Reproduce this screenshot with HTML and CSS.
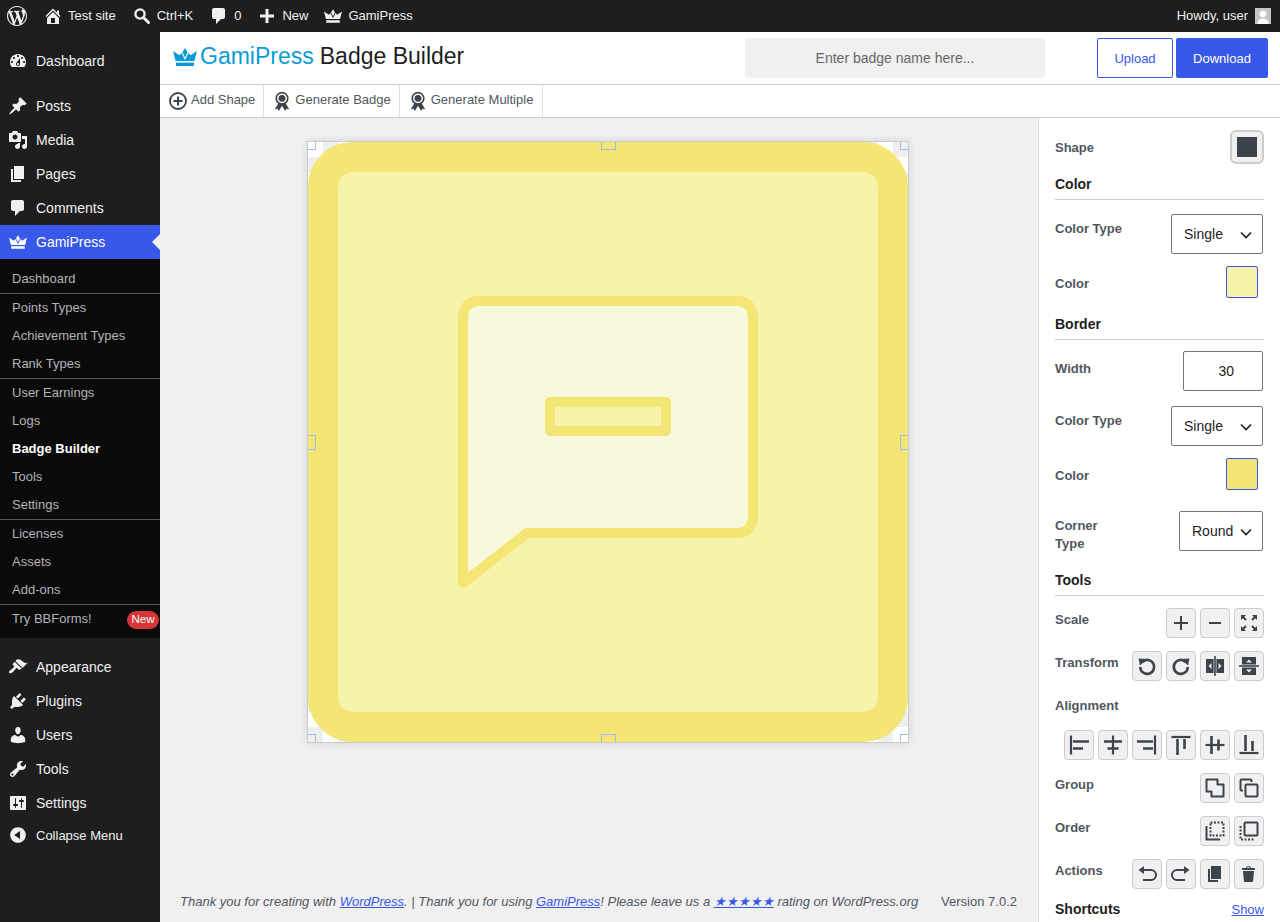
FILE: index.html
```html
<!DOCTYPE html>
<html>
<head>
    <title>Badge Builder</title>
    <link rel="stylesheet" href="styles.css">
</head>
<body>
    <svg class="icon-defs" xmlns="http://www.w3.org/2000/svg">
        <symbol id="i-wp" viewBox="0 0 20 20"><path d="M20 10c0-5.51-4.49-10-10-10C4.48 0 0 4.49 0 10c0 5.52 4.48 10 10 10 5.51 0 10-4.48 10-10zM7.78 15.37L4.37 6.22c.55-.02 1.17-.08 1.17-.08.5-.06.44-1.13-.06-1.11 0 0-1.45.11-2.37.11-.18 0-.37 0-.58-.01C4.12 2.69 6.87 1.11 10 1.11c2.33 0 4.45.87 6.05 2.34-.68-.11-1.65.39-1.65 1.58 0 .74.45 1.36.9 2.1.35.61.55 1.36.55 2.46 0 1.49-1.4 5-1.4 5l-3.03-8.37c.54-.02.82-.17.82-.17.5-.05.44-1.25-.06-1.22 0 0-1.44.12-2.38.12-.87 0-2.33-.12-2.33-.12-.5-.03-.56 1.2-.06 1.22l.92.08 1.26 3.41zM17.41 10c.24-.64.74-1.87.43-4.25.7 1.29 1.05 2.71 1.05 4.25 0 3.29-1.73 6.24-4.4 7.78.97-2.59 1.94-5.2 2.92-7.78zM6.1 18.09C3.12 16.65 1.11 13.53 1.11 10c0-1.3.23-2.48.72-3.59C3.25 10.3 4.67 14.2 6.1 18.09zm4.03-6.63l2.58 6.98c-.86.29-1.76.45-2.71.45-.79 0-1.57-.11-2.29-.33.81-2.38 1.62-4.74 2.42-7.1z"/></symbol>
        <symbol id="i-home" viewBox="0 0 20 20"><path d="M16 8.5l1.53 1.53-1.06 1.06L10 4.62l-6.47 6.47-1.06-1.06L10 2.5l4 4v-2h2v4zm-6-2.46l6 5.99V18H4v-5.97zM12 17v-5H8v5h4z"/></symbol>
        <symbol id="i-search" viewBox="0 0 20 20"><circle cx="8" cy="8" r="4.6" fill="none" stroke="currentColor" stroke-width="2.4"/><path d="M11.5 11.5l5 5" stroke="currentColor" stroke-width="3" stroke-linecap="round"/></symbol>
        <symbol id="i-comment" viewBox="0 0 20 20"><path d="M5 2h9c1.1 0 2 .9 2 2v7c0 1.1-.9 2-2 2h-2l-5 5v-5H5c-1.1 0-2-.9-2-2V4c0-1.1.9-2 2-2z"/></symbol>
        <symbol id="i-plus" viewBox="0 0 20 20"><path d="M8.5 3h3v5.5H17v3h-5.5V17h-3v-5.5H3v-3h5.5z"/></symbol>
        <symbol id="i-crown" viewBox="0 0 24 18"><path d="M12 0l2.6 4.2L12 9.4 9.4 4.2zM0 3l6.4 4.2L8.6 5 12 12l3.4-7 2.2 2.2L24 3l-2.6 10H2.6z"/><path d="M3 14.6h18V18H3z"/></symbol>
        <symbol id="i-dashboard" viewBox="0 0 20 20"><path d="M3.76 16h12.48c1.1-1.37 1.76-3.11 1.76-5 0-4.42-3.58-8-8-8s-8 3.58-8 8c0 1.89.66 3.63 1.76 5zM10 4c.55 0 1 .45 1 1s-.45 1-1 1-1-.45-1-1 .45-1 1-1zM6 6c.55 0 1 .45 1 1s-.45 1-1 1-1-.45-1-1 .45-1 1-1zm8 0c.55 0 1 .45 1 1s-.45 1-1 1-1-.45-1-1 .45-1 1-1zm-5.37 5.55L12 7v6c0 1.1-.9 2-2 2s-2-.9-2-2c0-.57.24-1.08.63-1.45zM4 10c.55 0 1 .45 1 1s-.45 1-1 1-1-.45-1-1 .45-1 1-1zm12 0c.55 0 1 .45 1 1s-.45 1-1 1-1-.45-1-1 .45-1 1-1zm-5 3c0-.55-.45-1-1-1s-1 .45-1 1 .45 1 1 1 1-.45 1-1z" fill-rule="evenodd"/></symbol>
        <symbol id="i-post" viewBox="0 0 20 20"><path d="M10.44 3.02l1.82-1.82 6.36 6.35-1.83 1.82c-1.05-.68-2.48-.57-3.41.36l-.75.75c-.92.93-1.04 2.35-.35 3.41l-1.83 1.82-2.41-2.41-2.8 2.79c-.42.42-3.38 2.71-3.8 2.29s1.86-3.39 2.28-3.81l2.79-2.79L4.1 9.36l1.83-1.82c1.05.69 2.48.57 3.4-.36l.75-.75c.93-.92 1.05-2.35.36-3.41z"/></symbol>
        <symbol id="i-media" viewBox="0 0 20 20"><path d="M13 11V4c0-.55-.45-1-1-1h-1.67L9 1H5L3.67 3H2c-.55 0-1 .45-1 1v7c0 .55.45 1 1 1h10c.55 0 1-.45 1-1zM7 4.5c1.38 0 2.5 1.12 2.5 2.5S8.38 9.5 7 9.5 4.5 8.38 4.5 7 5.62 4.5 7 4.5zM14 6h5v10.5c0 1.38-1.12 2.5-2.5 2.5S14 17.88 14 16.5s1.12-2.5 2.5-2.5c.17 0 .34.02.5.05V9h-3V6zm-4 8.05V13h2v3.5c0 1.38-1.12 2.5-2.5 2.5S7 17.88 7 16.5 8.12 14 9.5 14c.17 0 .34.02.5.05z"/></symbol>
        <symbol id="i-page" viewBox="0 0 20 20"><path d="M6 15V2h10v13H6zm-1 1h8v2H3V5h2v11z"/></symbol>
        <symbol id="i-appearance" viewBox="0 0 20 20"><path d="M14.48 11.06L7.41 3.99l1.5-1.5c.5-.56 2.3-.47 3.51.32 1.21.8 1.43 1.28 2.91 2.1 1.18.64 2.45 1.26 4.45.85zm-.71.71L6.7 4.7 4.93 6.47c-.39.39-.39 1.02 0 1.41l1.06 1.06c.39.39.39 1.03 0 1.42-.6.6-1.43 1.11-2.21 1.69-.35.26-.7.53-1.01.84C1.43 13.23.4 14.98 1.4 15.98c.99 1 2.75-.03 4.08-1.36.31-.31.58-.66.85-1.02.57-.78 1.08-1.61 1.69-2.21.39-.39 1.02-.39 1.41 0l1.06 1.06c.39.39 1.02.39 1.41 0z"/></symbol>
        <symbol id="i-plugins" viewBox="0 0 20 20"><path d="M13.11 4.36L9.87 7.6 8 5.73l3.24-3.24c.35-.34 1.05-.2 1.56.32.52.51.66 1.21.31 1.55zm-8 1.77l.91-1.12 9.01 9.01-1.19.84c-.71.71-2.63 1.16-3.82 1.16H6.14L4.9 17.26c-.59.59-1.54.59-2.12 0-.59-.58-.59-1.53 0-2.12l1.24-1.24v-3.88c0-1.13.4-3.19 1.09-3.89zm7.26 3.97l3.24-3.24c.34-.35 1.04-.21 1.55.31.52.51.66 1.21.31 1.55l-3.24 3.25z"/></symbol>
        <symbol id="i-users" viewBox="0 0 20 20"><path d="M10 9.25c-2.27 0-2.73-3.44-2.73-3.44C7 4.02 7.82 2 9.97 2c2.16 0 2.98 2.02 2.71 3.81 0 0-.41 3.44-2.68 3.44zm0 2.57L12.72 10c2.39 0 4.52 2.33 4.52 4.53v2.49s-3.65 1.13-7.24 1.13c-3.65 0-7.24-1.13-7.24-1.13v-2.49c0-2.25 1.94-4.48 4.47-4.48z"/></symbol>
        <symbol id="i-tools" viewBox="0 0 20 20"><path d="M16.68 9.77c-1.34 1.34-3.3 1.67-4.95.99l-5.41 6.52c-.99.99-2.59.99-3.58 0s-.99-2.59 0-3.57l6.52-5.42c-.68-1.65-.35-3.61.99-4.95 1.28-1.28 3.12-1.62 4.72-1.06l-2.89 2.89 2.82 2.82 2.86-2.87c.53 1.58.18 3.39-1.08 4.65zM3.81 16.21c.4.39 1.04.39 1.43 0 .4-.4.4-1.04 0-1.43-.39-.4-1.03-.4-1.43 0-.39.39-.39 1.03 0 1.43z"/></symbol>
        <symbol id="i-settings" viewBox="0 0 20 20"><path d="M18 16V4c0-.55-.45-1-1-1H3c-.55 0-1 .45-1 1v12c0 .55.45 1 1 1h14c.55 0 1-.45 1-1zM8 11h1c.55 0 1 .45 1 1s-.45 1-1 1H8v1.5c0 .28-.22.5-.5.5s-.5-.22-.5-.5V13H6c-.55 0-1-.45-1-1s.45-1 1-1h1V5.5c0-.28.22-.5.5-.5s.5.22.5.5V11zm5-2h-1c-.55 0-1-.45-1-1s.45-1 1-1h1V5.5c0-.28.22-.5.5-.5s.5.22.5.5V7h1c.55 0 1 .45 1 1s-.45 1-1 1h-1v5.5c0 .28-.22.5-.5.5s-.5-.22-.5-.5V9z"/></symbol>
        <symbol id="i-collapse" viewBox="0 0 20 20"><path d="M10 2.16c4.33 0 7.84 3.51 7.84 7.84s-3.51 7.84-7.84 7.84S2.16 14.33 2.16 10 5.71 2.16 10 2.16zm2 11.72V6.12L6.18 9.97z"/></symbol>
        <symbol id="i-add" viewBox="0 0 20 20"><circle cx="10" cy="10" r="8" fill="none" stroke="currentColor" stroke-width="1.8"/><path d="M9 5.5h2V9h3.5v2H11v3.5H9V11H5.5V9H9z"/></symbol>
        <symbol id="i-award" viewBox="0 0 20 20"><path d="M6.2 12.500L2.800 18.200l2.800-.4 1.300 2.200 3.100-5.200 3.100 5.200 1.300-2.200 2.800.4-3.400-5.700z"/><circle cx="10" cy="7.300" r="6.600"/><circle cx="10" cy="7.300" r="4.900" fill="#fff"/><circle cx="10" cy="7.300" r="3.400"/></symbol>
        <symbol id="i-chevron" viewBox="0 0 12 8"><path d="M1 1.5l5 5 5-5" fill="none" stroke="currentColor" stroke-width="1.6"/></symbol>

        <symbol id="t-plus" viewBox="0 0 20 20"><path d="M10 3v14M3 10h14" stroke-width="2"/></symbol>
        <symbol id="t-minus" viewBox="0 0 20 20"><path d="M4 10h12" stroke-width="2"/></symbol>
        <symbol id="t-fit" viewBox="0 0 20 20"><path d="M2 2h5L2 7zM18 2h-5l5 5zM2 18h5l-5-5zM18 18h-5l5-5z" class="solid"/><path d="M4 4l3 3M16 4l-3 3M4 16l3-3M16 16l-3-3" stroke-width="2"/></symbol>
        <symbol id="t-rotl" viewBox="0 0 20 20"><path d="M5.200 6a7 7 0 1 1-2 5" stroke-width="2.600"/><path d="M1.500 2.500l8.500.6-7 6.400z" class="solid"/></symbol>
        <symbol id="t-rotr" viewBox="0 0 20 20"><path d="M14.800 6a7 7 0 1 0 2 5" stroke-width="2.600"/><path d="M18.500 2.500l-8.500.6 7 6.400z" class="solid"/></symbol>
        <symbol id="t-fliph" viewBox="0 0 20 20"><path d="M1 3h7.600v14H1zM11.400 3H19v14h-7.600z" class="solid"/><path d="M10 0v20" stroke-width="1.600"/><path d="M6.500 7v6L3.500 10zM13.500 7v6l3-3z" class="light"/></symbol>
        <symbol id="t-flipv" viewBox="0 0 20 20"><path d="M3 1h14v7.600H3zM3 11.400h14V19H3z" class="solid"/><path d="M0 10h20" stroke-width="1.600"/><path d="M7 6.500h6L10 3.500zM7 13.500h6l-3 3z" class="light"/></symbol>
        <symbol id="t-al" viewBox="0 0 20 20"><path d="M2 .5v19" stroke-width="2.200"/><path d="M4 6.500h16M4 13.500h10" stroke-width="2.600"/></symbol>
        <symbol id="t-ac" viewBox="0 0 20 20"><path d="M10 .5v19" stroke-width="2.200"/><path d="M1 6.500h18M4.500 13.500h11" stroke-width="2.600"/></symbol>
        <symbol id="t-ar" viewBox="0 0 20 20"><path d="M18 .5v19" stroke-width="2.200"/><path d="M0 6.500h16M6 13.500h10" stroke-width="2.600"/></symbol>
        <symbol id="t-at" viewBox="0 0 20 20"><path d="M.5 2h19" stroke-width="2.200"/><path d="M6.500 4v16M13.500 4v10" stroke-width="2.600"/></symbol>
        <symbol id="t-am" viewBox="0 0 20 20"><path d="M.5 10h19" stroke-width="2.200"/><path d="M6.500 1v18M13.500 4.500v11" stroke-width="2.600"/></symbol>
        <symbol id="t-ab" viewBox="0 0 20 20"><path d="M.5 18h19" stroke-width="2.200"/><path d="M6.500 0v16M13.500 6v10" stroke-width="2.600"/></symbol>
        <symbol id="t-group" viewBox="0 0 20 20"><path d="M1.500 1.500h11v5h6v12h-12v-5h-5z" stroke-width="2" stroke-linejoin="round"/></symbol>
        <symbol id="t-ungroup" viewBox="0 0 20 20"><rect x="6.500" y="6.500" width="12" height="12" rx="1" stroke-width="2"/><path d="M4 12.500H2.500a1 1 0 0 1-1-1v-9a1 1 0 0 1 1-1h9a1 1 0 0 1 1 1V4" stroke-width="2"/></symbol>
        <symbol id="t-back" viewBox="0 0 20 20"><path d="M1.500 5v13.500H15" stroke-width="2"/><rect x="5.500" y="1.500" width="13" height="13" stroke-width="2" stroke-dasharray="2 1.500"/></symbol>
        <symbol id="t-front" viewBox="0 0 20 20"><rect x="5.500" y="1.500" width="13" height="13" rx="1" stroke-width="2"/><path d="M1.500 5v13.500H15" stroke-width="2" stroke-dasharray="2 1.500"/></symbol>
        <symbol id="t-undo" viewBox="0 0 20 20"><path d="M6 6h8a5 5 0 0 1 0 10H6" stroke-width="2"/><path d="M7 2v8L1.500 6z" class="solid"/></symbol>
        <symbol id="t-redo" viewBox="0 0 20 20"><path d="M14 6H6a5 5 0 0 0 0 10h8" stroke-width="2"/><path d="M13 2v8l5.500-4z" class="solid"/></symbol>
        <symbol id="t-copy" viewBox="0 0 20 20"><path d="M6 15V2h10v13H6zm-1 1h8v2H3V5h2v11z" class="solid"/></symbol>
        <symbol id="t-trash" viewBox="0 0 20 20"><path d="M12 4h3c.6 0 1 .4 1 1v1H3V5c0-.6.5-1 1-1h3c.2-1.100 1.300-2 2.500-2s2.300.9 2.500 2zM8 4h3c-.2-.6-.9-1-1.500-1S8.200 3.400 8 4zM4 7h11l-.9 10.100c0 .5-.5.9-1 .9H5.900c-.5 0-.9-.4-1-.9L4 7z" class="solid"/></symbol>
    </svg>

    <div class="adminbar">
        <div class="bar-group">
            <a class="bar-item bar-logo"><svg class="icon"><use href="#i-wp"/></svg></a>
            <a class="bar-item bar-home"><svg class="icon"><use href="#i-home"/></svg>Test site</a>
            <a class="bar-item"><svg class="icon"><use href="#i-search"/></svg>Ctrl+K</a>
            <a class="bar-item"><svg class="icon"><use href="#i-comment"/></svg>0</a>
            <a class="bar-item"><svg class="icon"><use href="#i-plus"/></svg>New</a>
            <a class="bar-item bar-gami"><svg class="icon icon-crown"><use href="#i-crown"/></svg>GamiPress</a>
        </div>
        <a class="bar-item bar-user">Howdy, user
            <svg class="avatar" viewBox="0 0 16 16"><rect width="16" height="16" fill="#c3c4c7"/><circle cx="8" cy="6" r="3.300" fill="#fff"/><path d="M2.500 16c0-4 2.500-5.500 5.500-5.500s5.500 1.500 5.500 5.500z" fill="#fff"/></svg>
        </a>
    </div>

    <div class="wrap">
        <div class="sidebar">
            <div class="menu-item menu-first"><svg class="icon"><use href="#i-dashboard"/></svg>Dashboard</div>
            <div class="menu-gap"></div>
            <div class="menu-item"><svg class="icon"><use href="#i-post"/></svg>Posts</div>
            <div class="menu-item"><svg class="icon"><use href="#i-media"/></svg>Media</div>
            <div class="menu-item"><svg class="icon"><use href="#i-page"/></svg>Pages</div>
            <div class="menu-item"><svg class="icon"><use href="#i-comment"/></svg>Comments</div>
            <div class="menu-item active"><svg class="icon icon-crown"><use href="#i-crown"/></svg>GamiPress</div>
            <div class="submenu">
                <div class="sub-group">
                    <div class="sub-item">Dashboard</div>
                </div>
                <div class="sub-group">
                    <div class="sub-item">Points Types</div>
                    <div class="sub-item">Achievement Types</div>
                    <div class="sub-item">Rank Types</div>
                </div>
                <div class="sub-group">
                    <div class="sub-item">User Earnings</div>
                    <div class="sub-item">Logs</div>
                    <div class="sub-item current">Badge Builder</div>
                    <div class="sub-item">Tools</div>
                    <div class="sub-item">Settings</div>
                </div>
                <div class="sub-group">
                    <div class="sub-item">Licenses</div>
                    <div class="sub-item">Assets</div>
                    <div class="sub-item">Add-ons</div>
                </div>
                <div class="sub-group sub-last">
                    <div class="sub-item">Try BBForms!<span class="new-badge">New</span></div>
                </div>
            </div>
            <div class="menu-gap menu-gap-big"></div>
            <div class="menu-item"><svg class="icon"><use href="#i-appearance"/></svg>Appearance</div>
            <div class="menu-item"><svg class="icon"><use href="#i-plugins"/></svg>Plugins</div>
            <div class="menu-item"><svg class="icon"><use href="#i-users"/></svg>Users</div>
            <div class="menu-item"><svg class="icon"><use href="#i-tools"/></svg>Tools</div>
            <div class="menu-item"><svg class="icon"><use href="#i-settings"/></svg>Settings</div>
            <div class="menu-item menu-collapse"><svg class="icon"><use href="#i-collapse"/></svg>Collapse Menu</div>
        </div>

        <div class="main">
            <div class="header">
                <h1><svg class="title-crown"><use href="#i-crown"/></svg><span class="brand">GamiPress</span><span>Badge Builder</span></h1>
                <input class="badge-name" type="text" placeholder="Enter badge name here...">
                <button class="btn btn-outline">Upload</button>
                <button class="btn btn-primary">Download</button>
            </div>
            <div class="toolbar">
                <div class="tool-item"><svg class="icon"><use href="#i-add"/></svg><span>Add Shape</span></div>
                <div class="tool-item"><svg class="icon"><use href="#i-award"/></svg><span>Generate Badge</span></div>
                <div class="tool-item"><svg class="icon"><use href="#i-award"/></svg><span>Generate Multiple</span></div>
            </div>

            <div class="content">
                <div class="editor">
                    <div class="canvas-area">
                        <div class="stage">
                            <svg class="badge" viewBox="0 0 600 600">
                                <rect x="15" y="15" width="570" height="570" rx="30" fill="#f8f3ab" stroke="#f3e675" stroke-width="30"/>
                                <path d="M170 159H430a15 15 0 0 1 15 15V376a15 15 0 0 1-15 15H219L155 441V174a15 15 0 0 1 15-15z" fill="#f8f8dd" stroke="#f3e675" stroke-width="10" stroke-linejoin="round"/>
                                <rect x="242" y="260" width="116" height="29" fill="#f8f3ab" stroke="#f3e675" stroke-width="10" stroke-linejoin="round"/>
                            </svg>
                            <span class="handle h-tl"></span>
                            <span class="handle h-t"></span>
                            <span class="handle h-tr"></span>
                            <span class="handle h-l"></span>
                            <span class="handle h-r"></span>
                            <span class="handle h-bl"></span>
                            <span class="handle h-b"></span>
                            <span class="handle h-br"></span>
                        </div>
                    </div>
                    <div class="footer">
                        <span class="thanks">Thank you for creating with <a>WordPress</a>. | Thank you for using <a>GamiPress</a>! Please leave us a <a>★★★★★</a> rating on WordPress.org</span>
                        <span>Version 7.0.2</span>
                    </div>
                </div>

                <div class="panel">
                    <div class="row row-shape">
                        <label>Shape</label>
                        <div class="shape-pick"><span></span></div>
                    </div>

                    <h3 class="first">Color</h3>
                    <div class="row row-select">
                        <label>Color Type</label>
                        <div class="select select-wide">Single<svg><use href="#i-chevron"/></svg></div>
                    </div>
                    <div class="row row-color">
                        <label>Color</label>
                        <span class="swatch light-fill"></span>
                    </div>

                    <h3>Border</h3>
                    <div class="row row-width">
                        <label>Width</label>
                        <input class="num" type="text" value="30">
                    </div>
                    <div class="row row-select">
                        <label>Color Type</label>
                        <div class="select select-wide">Single<svg><use href="#i-chevron"/></svg></div>
                    </div>
                    <div class="row row-color row-color-last">
                        <label>Color</label>
                        <span class="swatch dark-fill"></span>
                    </div>
                    <div class="row row-select">
                        <label class="two-line">Corner Type</label>
                        <div class="select">Round<svg><use href="#i-chevron"/></svg></div>
                    </div>

                    <h3 class="tools-head">Tools</h3>
                    <div class="row row-tools">
                        <label>Scale</label>
                        <div class="btns">
                            <button class="ib"><svg><use href="#t-plus"/></svg></button>
                            <button class="ib"><svg><use href="#t-minus"/></svg></button>
                            <button class="ib"><svg><use href="#t-fit"/></svg></button>
                        </div>
                    </div>
                    <div class="row row-tools">
                        <label>Transform</label>
                        <div class="btns">
                            <button class="ib"><svg><use href="#t-rotl"/></svg></button>
                            <button class="ib"><svg><use href="#t-rotr"/></svg></button>
                            <button class="ib"><svg><use href="#t-fliph"/></svg></button>
                            <button class="ib"><svg><use href="#t-flipv"/></svg></button>
                        </div>
                    </div>
                    <div class="row-stack">
                        <label>Alignment</label>
                        <div class="btns">
                            <button class="ib"><svg><use href="#t-al"/></svg></button>
                            <button class="ib"><svg><use href="#t-ac"/></svg></button>
                            <button class="ib"><svg><use href="#t-ar"/></svg></button>
                            <button class="ib"><svg><use href="#t-at"/></svg></button>
                            <button class="ib"><svg><use href="#t-am"/></svg></button>
                            <button class="ib"><svg><use href="#t-ab"/></svg></button>
                        </div>
                    </div>
                    <div class="row row-tools">
                        <label>Group</label>
                        <div class="btns">
                            <button class="ib"><svg><use href="#t-group"/></svg></button>
                            <button class="ib"><svg><use href="#t-ungroup"/></svg></button>
                        </div>
                    </div>
                    <div class="row row-tools">
                        <label>Order</label>
                        <div class="btns">
                            <button class="ib"><svg><use href="#t-back"/></svg></button>
                            <button class="ib"><svg><use href="#t-front"/></svg></button>
                        </div>
                    </div>
                    <div class="row row-tools">
                        <label>Actions</label>
                        <div class="btns">
                            <button class="ib"><svg><use href="#t-undo"/></svg></button>
                            <button class="ib"><svg><use href="#t-redo"/></svg></button>
                            <button class="ib"><svg><use href="#t-copy"/></svg></button>
                            <button class="ib"><svg><use href="#t-trash"/></svg></button>
                        </div>
                    </div>
                    <div class="row row-shortcuts">
                        <strong>Shortcuts</strong>
                        <a>Show</a>
                    </div>
                </div>
            </div>
        </div>
    </div>
</body>
</html>
```

FILE: styles.css
```css
* { box-sizing: border-box; }
html, body { margin: 0; height: 100%; overflow: hidden; }
body { font-family: "Liberation Sans", Arial, sans-serif; font-size: 13px; color: #3c434a; background: #f0f0f0; display: flex; flex-direction: column; }

.icon-defs { display: none; }
.icon { width: 20px; height: 20px; fill: currentColor; flex: none; }
.icon-crown { width: 18px; height: 14px; margin: 0 1px; }

/* admin bar */
.adminbar { height: 32px; flex: none; background: #1e1e1e; color: #f0f0f1; display: flex; justify-content: space-between; }
.bar-group { display: flex; }
.bar-item { display: flex; align-items: center; gap: 5px; padding: 0 8px; height: 32px; line-height: 32px; }
.bar-logo { padding: 0 7px; }
.bar-home { padding-left: 9px; }
.bar-gami { padding-left: 7px; }
.bar-user { gap: 7px; padding: 0 9px 0 0; }
.avatar { width: 16px; height: 16px; display: block; }

.wrap { flex: 1; display: flex; min-height: 0; }

/* left menu */
.sidebar { width: 160px; flex: none; background: #1e1e1e; color: #f0f0f1; padding-top: 12px; }
.menu-item { position: relative; height: 34px; display: flex; align-items: center; gap: 8px; padding-left: 8px; font-size: 14px; }
.menu-gap { height: 11px; }
.menu-gap-big { height: 12px; }
.menu-item.active { background: #3858e9; color: #fff; }
.menu-item.active::after { content: ""; position: absolute; right: 0; top: 9px; border: 8px solid transparent; border-left: 0; border-right-color: #f0f0f0; }
.menu-collapse { font-size: 13px; height: 30px; }

.submenu { background: #0a0a0a; padding: 6px 0 5px; color: #b4b4b4; }
.sub-group { border-bottom: 1px solid #555; }
.sub-last { border-bottom: 0; }
.sub-item { height: 28px; line-height: 28px; padding-left: 12px; position: relative; }
.sub-item.current { color: #fff; font-weight: bold; }
.new-badge { position: absolute; right: 1px; top: 6px; height: 18px; width: 32px; border-radius: 9px; background: #d63638; color: #fff; font-size: 11.5px; line-height: 17px; text-align: center; }

/* main area */
.main { flex: 1; display: flex; flex-direction: column; min-width: 0; }
.header { height: 53px; flex: none; background: #fff; border-bottom: 1px solid #ccc; display: flex; align-items: flex-start; padding: 6px 12px 0 13px; }
h1 { margin: 0; font-size: 23px; font-weight: 400; color: #1e1e1e; line-height: 36px; display: flex; align-items: center; gap: 6px; width: 572px; }
h1 .brand { color: #0a9bd7; margin-left: -3px; }
.title-crown { width: 24px; height: 18px; fill: #0a9bd7; margin-top: 2px; }
.badge-name { width: 300px; height: 40px; border: 0; border-radius: 3px; background: #f0f0f0; text-align: center; font: 14px "Liberation Sans", Arial, sans-serif; margin-right: 52px; outline: 0; }
.badge-name::placeholder { color: #666; opacity: 1; }
.btn { height: 40px; border-radius: 2px; font: 13px "Liberation Sans", Arial, sans-serif; padding: 0; }
.btn-outline { width: 76px; background: #fff; border: 1px solid #3858e9; color: #3858e9; margin-right: 3px; }
.btn-primary { width: 92px; background: #3858e9; border: 1px solid #3858e9; color: #fff; }

.toolbar { height: 33px; flex: none; background: #fff; border-bottom: 1px solid #ccc; display: flex; }
.tool-item { display: flex; align-items: center; gap: 3px; padding: 0 8px; border-right: 1px solid #ddd; color: #50575e; }
.tool-item:last-child { padding-right: 9px; }
.tool-item .icon { color: #3c434a; }
.tool-item span { padding-bottom: 4px; }

.content { flex: 1; display: flex; min-height: 0; }
.editor { flex: 1; display: flex; flex-direction: column; min-width: 0; }
.canvas-area { flex: 1; padding: 23px 0 0 147px; }

.stage { position: relative; width: 602px; height: 602px; border: 1px solid #ccc; box-shadow: 0 0 8px rgba(0, 0, 0, .12); background: repeating-conic-gradient(#eee 0 25%, #fff 0 50%) 0 0 / 30px 30px; }
.badge { display: block; width: 600px; height: 600px; }
.handle { position: absolute; border: 0 solid #a0bcf5; }
.h-tl, .h-tr, .h-bl, .h-br { width: 8px; height: 8px; }
.h-tl { left: 0; top: 0; border-width: 0 1px 1px 0; }
.h-tr { right: 0; top: 0; border-width: 0 0 1px 1px; }
.h-bl { left: 0; bottom: 0; border-width: 1px 1px 0 0; }
.h-br { right: 0; bottom: 0; border-width: 1px 0 0 1px; }
.h-t, .h-b { width: 15px; height: 8px; left: 293px; }
.h-t { top: 0; border-width: 0 1px 1px; }
.h-b { bottom: 0; border-width: 1px 1px 0; }
.h-l, .h-r { width: 8px; height: 15px; top: 293px; }
.h-l { left: 0; border-width: 1px 1px 1px 0; }
.h-r { right: 0; border-width: 1px 0 1px 1px; }

.footer { height: 42px; flex: none; display: flex; justify-content: space-between; padding: 1px 21px 0 20px; line-height: 42px; color: #50575e; }
.thanks { font-style: italic; }
.footer a { color: #3858e9; text-decoration: underline; }

/* right panel */
.panel { width: 242px; flex: none; background: #fff; border-left: 1px solid #ddd; padding: 12px 16px 0; overflow: hidden; }
.panel h3 { margin: 16px 0 12px; height: 26px; font-size: 14px; line-height: 20px; color: #1e1e1e; border-bottom: 1px solid #ccc; }
.panel h3.first { margin: 10px 0 14px; }
.panel h3.tools-head { margin-top: 19px; }
.row { display: flex; justify-content: space-between; align-items: flex-start; }
.panel label { font-weight: bold; color: #50575e; line-height: 18px; }
.two-line { width: 60px; }

.row-shape { align-items: center; }
.row-shape label { padding-top: 1px; }
.shape-pick { width: 34px; height: 34px; border: 2px solid #ccc; border-radius: 6px; background: #f0f0f0; padding: 5px; }
.shape-pick span { display: block; width: 20px; height: 20px; background: #3c434a; }

.row-select { height: 40px; margin-bottom: 12px; padding-right: 1px; }
.row-select label { padding-top: 6px; }
.select { height: 40px; width: 84px; border: 1px solid #757575; border-radius: 2px; background: #fff; color: #1e1e1e; font-size: 14px; line-height: 38px; padding-left: 12px; position: relative; }
.select-wide { width: 92px; }
.select svg { position: absolute; right: 10px; top: 16px; width: 12px; height: 8px; color: #1e1e1e; }

.row-color { padding-right: 6px; }
.row-color label { padding-top: 9px; }
.row-color-last { margin-bottom: 21px; }
.swatch { display: block; width: 32px; height: 32px; border: 1px solid #3858e9; border-radius: 2px; }
.light-fill { background: #f8f3ab; }
.dark-fill { background: #f3e675; }

.row-width { margin-top: -1px; margin-bottom: 15px; padding-right: 1px; }
.row-width label { padding-top: 9px; }
.num { width: 80px; height: 40px; border: 1px solid #757575; border-radius: 2px; font: 14px "Liberation Sans", Arial, sans-serif; color: #1e1e1e; text-align: right; padding: 0 28px 0 0; outline: 0; }

.btns { display: flex; justify-content: flex-end; flex-wrap: wrap; gap: 4px; }
.ib { width: 30px; height: 30px; padding: 0; background: #f0f0f0; border: 1px solid #ccc; border-radius: 4px; color: #3c434a; display: flex; align-items: center; justify-content: center; }
.ib svg { width: 20px; height: 20px; fill: none; stroke: #3c434a; }
.solid { fill: #3c434a; stroke: none; }
.light { fill: #f0f0f0; stroke: none; }
.row-tools { margin-bottom: 13px; }
.row-tools label { padding-top: 3px; }
.row-stack { margin-bottom: 13px; }
.row-stack label { display: block; padding: 3px 0 15px; }

.row-shortcuts { margin-top: -3px; line-height: 20px; }
.row-shortcuts strong { font-size: 14px; color: #1e1e1e; }
.row-shortcuts a { color: #3858e9; text-decoration: underline; padding-top: 1px; }
```
